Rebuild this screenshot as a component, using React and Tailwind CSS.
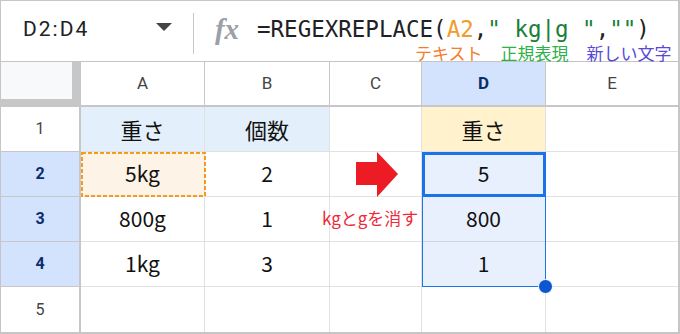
export default function App() {
  const cjk = "font-['Noto_Sans_CJK_JP',sans-serif]";
  const colHead = "flex items-center justify-center border-r border-b-2 border-[#c7c7c7] text-[17px] text-[#444]";
  const rowHead = "flex items-center justify-center border-r-2 border-b border-[#c7c7c7] text-[16px]";
  const cell = "flex items-center justify-center border-r border-b border-[#e1e1e1] text-[21px] text-[#111] " + cjk;
  const cellLast = "flex items-center justify-center border-b border-[#e1e1e1]";
  return (
    <div className="w-[680px] h-[334px] bg-white border-t border-l border-r-2 border-b-2 border-[#c6c6c6] overflow-hidden font-['Roboto',sans-serif]">
      {/* formula bar */}
      <div className="h-[61px] border-b border-[#c4c4c4] flex">
        <div className="w-[192px] flex items-start justify-between pl-[22px] pr-[21px] pt-[16px]">
          <span className="text-[21px] leading-[24px] tracking-[2px] text-[#202124]">D2:D4</span>
          <svg width="16" height="8" viewBox="0 0 16 8" className="mt-[6px]">
            <polygon points="0,0 16,0 8,8" fill="#444" />
          </svg>
        </div>
        <div className="w-px h-[41px] mt-[12px] bg-[#c7c7c7]" />
        <div className="w-[30px] ml-[18px] mt-[14px] h-[28px] flex items-center justify-center font-['Liberation_Serif',serif] italic font-bold text-[29px] text-[#9aa0a6] leading-none">
          fx
        </div>
        <div className="ml-[15px] flex flex-col">
          <div className="mt-[16px] font-['DejaVu_Sans_Mono',monospace] text-[22.5px] leading-[24px] text-[#202124] whitespace-pre">
            =REGEXREPLACE(<span className="text-[#f29b2e]">A2</span>,<span className="text-[#188038]">" kg|g "</span>,<span className="text-[#188038]">""</span>)
          </div>
          <div className={"mt-[2px] ml-[158px] flex gap-[18px] text-[17px] leading-[20px] whitespace-nowrap " + cjk}>
            <span className="text-[#f57c2e]">テキスト</span>
            <span className="text-[#2db14a]">正規表現</span>
            <span className="text-[#5748d6]">新しい文字</span>
          </div>
        </div>
      </div>

      {/* grid */}
      <div className="relative grid grid-cols-[80px_124px_125px_92px_124px_132px] grid-rows-[45px_45px_45px_45px_45px_45px]">
        {/* header row */}
        <div className="bg-[#c7c7c7]">
          <div className="w-[71px] h-[37px] bg-[#f8f9fa]" />
        </div>
        <div className={colHead}>A</div>
        <div className={colHead}>B</div>
        <div className={colHead}>C</div>
        <div className={colHead + " bg-[#d3e3fd] !text-[#0b2e6b] font-bold"}>D</div>
        <div className="flex items-center justify-center border-b-2 border-[#c7c7c7] text-[17px] text-[#444]">E</div>

        {/* row 1 */}
        <div className={rowHead + " text-[#444]"}>1</div>
        <div className={cell + " bg-[#e3f0fc] !text-[22px]"}>重さ</div>
        <div className={cell + " bg-[#e3f0fc] !text-[22px]"}>個数</div>
        <div className={cell}></div>
        <div className={cell + " bg-[#fff2cc] !text-[22px]"}>重さ</div>
        <div className={cellLast}></div>

        {/* row 2 */}
        <div className={rowHead + " bg-[#d3e3fd] text-[#0b2e6b] font-bold"}>2</div>
        <div className={cell + " bg-[#fdf3e6]"}>5kg</div>
        <div className={cell}>2</div>
        <div className={cell}></div>
        <div className={cell + " bg-[#e8f0fe]"}>5</div>
        <div className={cellLast}></div>

        {/* row 3 */}
        <div className={rowHead + " bg-[#d3e3fd] text-[#0b2e6b] font-bold"}>3</div>
        <div className={cell}>800g</div>
        <div className={cell}>1</div>
        <div className={cell}></div>
        <div className={cell + " bg-[#e8f0fe] border-b-[#cad5e6]"}>800</div>
        <div className={cellLast}></div>

        {/* row 4 */}
        <div className={rowHead + " bg-[#d3e3fd] text-[#0b2e6b] font-bold"}>4</div>
        <div className={cell}>1kg</div>
        <div className={cell}>3</div>
        <div className={cell}></div>
        <div className={cell + " bg-[#e8f0fe]"}>1</div>
        <div className={cellLast}></div>

        {/* row 5 */}
        <div className={rowHead + " text-[#444] border-b-0"}>5</div>
        <div className={cell + " border-b-0"}></div>
        <div className={cell + " border-b-0"}></div>
        <div className={cell + " border-b-0"}></div>
        <div className={cell + " border-b-0"}></div>
        <div></div>

        {/* copy marquee on A2 */}
        <svg className="absolute left-[80px] top-[90px]" width="125" height="45" viewBox="0 0 125 45">
          <rect x="1" y="1" width="123" height="43" fill="none" stroke="#f39c1f" strokeWidth="2" strokeDasharray="4 2" />
        </svg>
        {/* range D2:D4 */}
        <div className="absolute left-[421px] top-[90px] w-[124px] h-[135px] border border-[#1a73e8]" />
        {/* active cell D2 */}
        <div className="absolute left-[421px] top-[90px] w-[124px] h-[45px] border-[3px] border-[#1a73e8]" />
        {/* fill handle */}
        <div className="absolute left-[537px] top-[217px] w-[15px] h-[15px] rounded-full bg-[#0b57d0] border border-white" />
        {/* red arrow */}
        <svg className="absolute left-[355px] top-[90px]" width="42" height="46" viewBox="0 0 42 46">
          <polygon points="0,10 21,10 21,0 42,22 21,45 21,33 0,33" fill="#ed1c24" />
        </svg>
        {/* annotation */}
        <div className={"absolute left-[321px] top-[146px] text-[17px] leading-[20px] text-[#ee2a3a] whitespace-nowrap " + cjk}>
          kgとgを消す
        </div>
      </div>
    </div>
  );
}
